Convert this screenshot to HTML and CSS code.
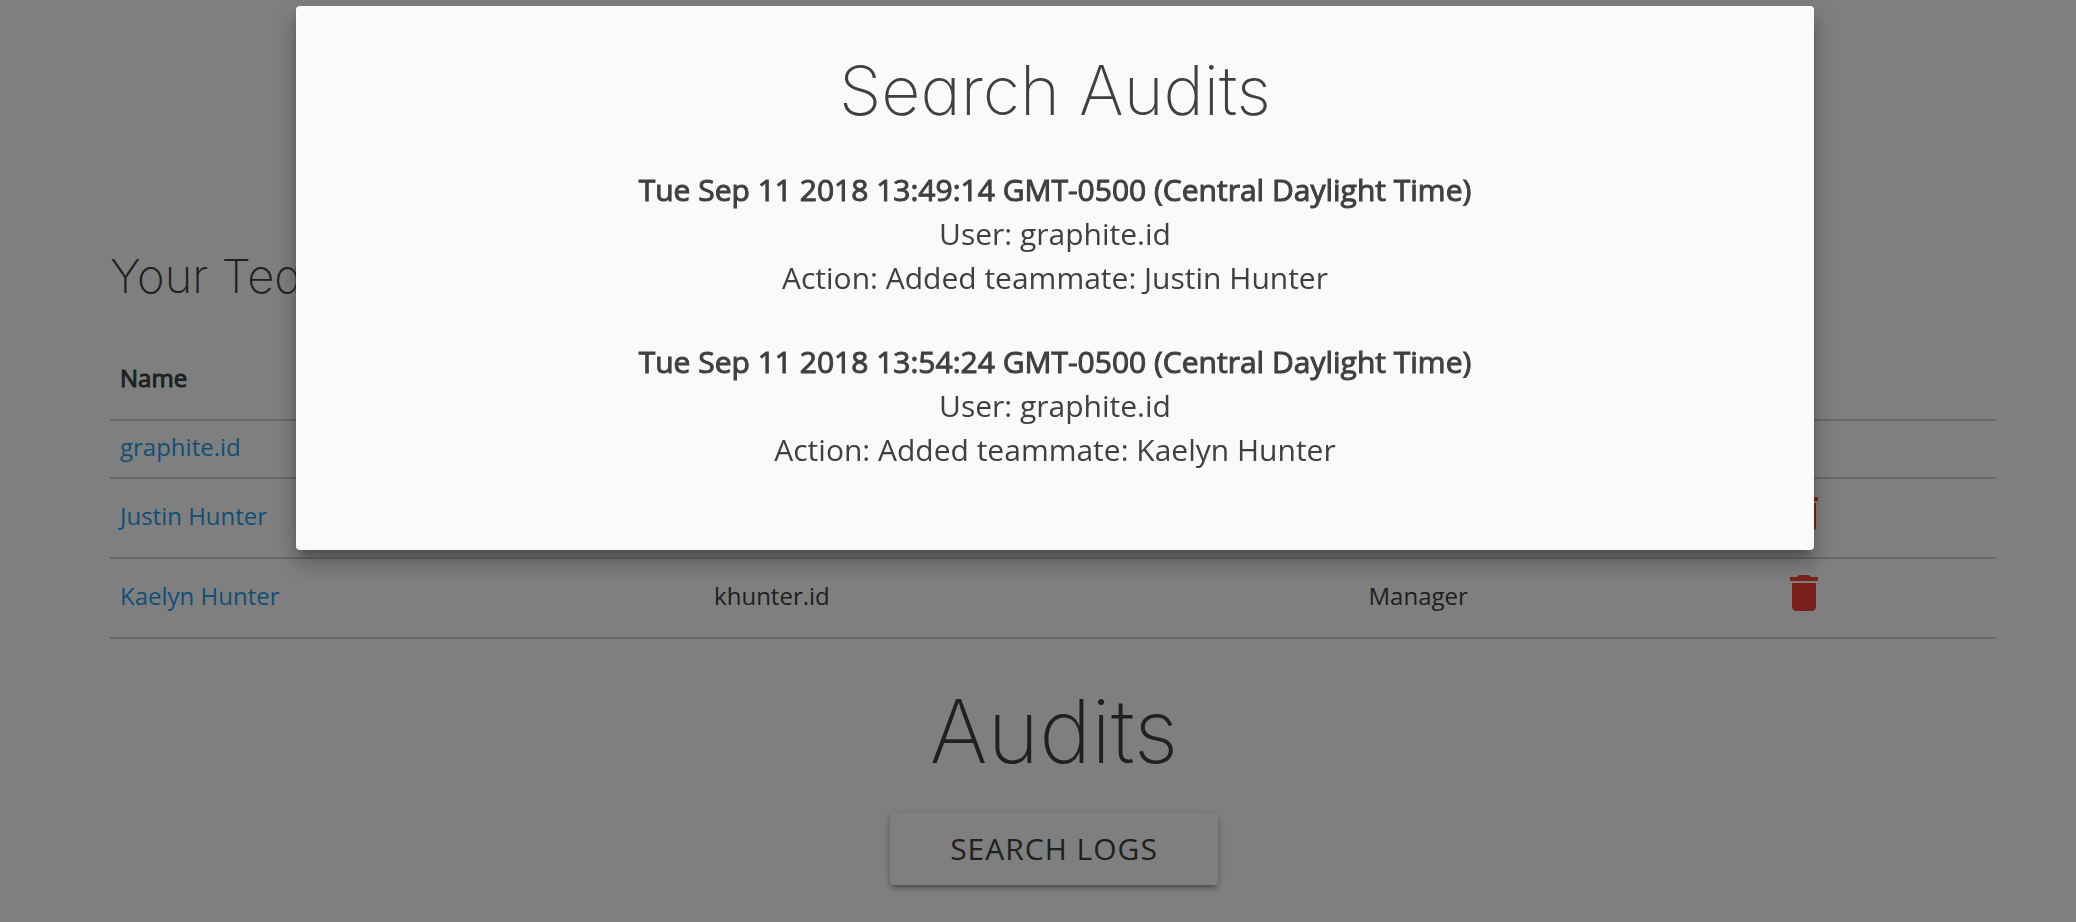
FILE: index.html
```html
<!DOCTYPE html>
<html lang="en">
<head>
<meta charset="utf-8">
<meta name="viewport" content="width=device-width, initial-scale=1">
<title>Your Team</title>
<link rel="stylesheet" href="styles.css">
</head>
<body>
<svg class="sprite" aria-hidden="true">
  <symbol id="icon-delete" viewBox="0 0 24 24">
    <path d="M6 19c0 1.1.9 2 2 2h8c1.1 0 2-.9 2-2V7H6v12zM19 4h-3.500l-1-1h-5l-1 1H5v2h14V4z"/>
  </symbol>
</svg>
<main class="page">
  <section class="team">
    <h2 class="team-title">Your Team</h2>
    <table class="team-table">
      <colgroup>
        <col class="col-name">
        <col class="col-id">
        <col class="col-role">
        <col class="col-action">
      </colgroup>
      <thead>
        <tr><th scope="col">Name</th><td></td><td></td><td></td></tr>
      </thead>
      <tbody>
        <tr><td><a href="#graphite">graphite.id</a></td><td></td><td></td><td></td></tr>
        <tr>
          <td><a href="#justin">Justin Hunter</a></td><td></td><td></td>
          <td><button class="delete" type="button" aria-label="Delete Justin Hunter"><svg class="icon"><use href="#icon-delete"/></svg></button></td>
        </tr>
        <tr>
          <td><a href="#kaelyn">Kaelyn Hunter</a></td><td>khunter.id</td><td>Manager</td>
          <td><button class="delete" type="button" aria-label="Delete Kaelyn Hunter"><svg class="icon"><use href="#icon-delete"/></svg></button></td>
        </tr>
      </tbody>
    </table>
  </section>
  <section class="audits">
    <h1 class="audits-title">Audits</h1>
    <button class="search-logs" type="button">SEARCH LOGS</button>
  </section>
</main>
<div class="overlay">
  <div class="modal" role="dialog" aria-modal="true" aria-labelledby="modal-title">
    <h2 class="modal-title" id="modal-title">Search Audits</h2>
    <ul class="logs">
      <li class="log">
        <p class="log-date">Tue Sep 11 2018 13:49:14 GMT-0500 (Central Daylight Time)</p>
        <p>User: graphite.id</p>
        <p>Action: Added teammate: Justin Hunter</p>
      </li>
      <li class="log">
        <p class="log-date">Tue Sep 11 2018 13:54:24 GMT-0500 (Central Daylight Time)</p>
        <p>User: graphite.id</p>
        <p>Action: Added teammate: Kaelyn Hunter</p>
      </li>
    </ul>
  </div>
</div>
</body>
</html>
```

FILE: styles.css
```css
* {
  box-sizing: border-box;
}

body {
  margin: 0;
  background: #fff;
  color: #404040;
  font-family: "Open Sans", "Noto Sans", sans-serif;
  font-size: 30px;
  line-height: 44px;
}

h1, h2, p, ul {
  margin: 0;
  padding: 0;
}

a {
  color: #1e9fee;
  text-decoration: none;
}

.sprite {
  display: none;
}

.page {
  padding: 240px 78px 32px 110px;
}

.team {
  padding-right: 2px;
}

.team-title,
.audits-title,
.modal-title {
  font-family: Inter, Lato, sans-serif;
  font-feature-settings: "cv11";
  font-weight: 200;
}

.team-title {
  font-size: 47px;
  line-height: 72px;
  margin-bottom: 28px;
}

.team-table {
  width: 100%;
  table-layout: fixed;
  border-collapse: collapse;
  font-size: 24px;
  line-height: 38px;
}

.col-name { width: 31.5%; }
.col-id { width: 34.7%; }
.col-role { width: 21.8%; }
.col-action { width: 12%; }

.team-table tr {
  height: 80px;
  border-bottom: 2px solid #d0d0d0;
}

.team-table tbody tr:first-child {
  height: 58px;
}

.team-table th,
.team-table td {
  padding: 0 10px 4px;
  text-align: left;
  vertical-align: middle;
}

.team-table th {
  font-weight: 400;
  -webkit-text-stroke: 1px currentColor;
}

.delete {
  display: block;
  padding: 0 0 6px;
  border: 0;
  background: none;
  color: #f44336;
}

.icon {
  display: block;
  width: 48px;
  height: 48px;
  fill: currentColor;
}

.audits {
  display: flex;
  flex-direction: column;
  align-items: center;
  gap: 28px;
  padding-top: 38px;
}

.audits-title {
  font-size: 88px;
  line-height: 108px;
}

.search-logs {
  padding: 14px 60px;
  border: 0;
  border-radius: 4px;
  background: #fff;
  color: inherit;
  font: inherit;
  letter-spacing: 1px;
  box-shadow: 0 4px 4px rgba(0, 0, 0, 0.14), 0 6px 2px -4px rgba(0, 0, 0, 0.12), 0 2px 10px rgba(0, 0, 0, 0.2);
}

.overlay {
  position: fixed;
  inset: 0;
  display: flex;
  justify-content: center;
  align-items: flex-start;
  padding: 6px 0 0 34px;
  background: rgba(0, 0, 0, 0.5);
}

.modal {
  width: 1518px;
  max-width: 75%;
  padding: 46px 48px 78px;
  border-radius: 4px;
  background: #fafafa;
  text-align: center;
  box-shadow: 0 16px 20px 2px rgba(0, 0, 0, 0.14), 0 6px 28px 4px rgba(0, 0, 0, 0.12), 0 8px 10px -4px rgba(0, 0, 0, 0.3);
}

.modal-title {
  font-size: 68px;
  line-height: 76px;
  margin-bottom: 40px;
}

.logs {
  display: grid;
  gap: 40px;
  list-style: none;
}

.log-date {
  -webkit-text-stroke: 1px currentColor;
}
```
